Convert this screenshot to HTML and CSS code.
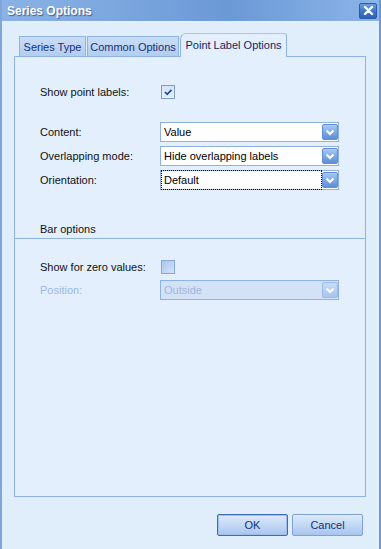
FILE: index.html
```html
<!DOCTYPE html>
<html lang="en">
<head>
    <meta charset="UTF-8">
    <title>Series Options</title>
    <link rel="stylesheet" href="styles.css">
</head>
<body>
<div class="window">
    <div class="titlebar">
        <span class="title">Series Options</span>
        <span class="close">
            <svg width="11" height="9" viewBox="0 0 11 9"><path d="M2 1 L9 8 M9 1 L2 8" stroke="#fff" stroke-width="2.4" stroke-linecap="round"/></svg>
        </span>
    </div>

    <div class="content">
        <div class="tabs">
            <div class="tab t1">Series Type</div>
            <div class="tab t2">Common Options</div>
            <div class="tab t3 active">Point Label Options</div>
        </div>

        <div class="panel">
            <div class="section">
                <div class="row first">
                    <span class="label">Show point labels:</span>
                    <span class="check">
                        <svg width="12" height="12" viewBox="0 0 12 12"><path d="M3 6 L5.2 8.3 L9.5 3.8" fill="none" stroke="#1d4c9c" stroke-width="1.8"/></svg>
                    </span>
                </div>
                <div class="row big">
                    <span class="label">Content:</span>
                    <div class="select"><span class="value">Value</span><span class="arrow"><svg width="16" height="16" viewBox="0 0 16 16"><path d="M4.5 6.5 L8 10 L11.5 6.5" fill="none" stroke="#fff" stroke-width="2.2"/></svg></span></div>
                </div>
                <div class="row">
                    <span class="label">Overlapping mode:</span>
                    <div class="select"><span class="value">Hide overlapping labels</span><span class="arrow"><svg width="16" height="16" viewBox="0 0 16 16"><path d="M4.5 6.5 L8 10 L11.5 6.5" fill="none" stroke="#fff" stroke-width="2.2"/></svg></span></div>
                </div>
                <div class="row">
                    <span class="label">Orientation:</span>
                    <div class="select focused"><span class="value">Default</span><span class="arrow"><svg width="16" height="16" viewBox="0 0 16 16"><path d="M4.5 6.5 L8 10 L11.5 6.5" fill="none" stroke="#fff" stroke-width="2.2"/></svg></span></div>
                </div>
            </div>

            <div class="group-head">Bar options</div>

            <div class="section">
                <div class="row zero">
                    <span class="label">Show for zero values:</span>
                    <span class="check empty"></span>
                </div>
                <div class="row tight">
                    <span class="label disabled">Position:</span>
                    <div class="select off"><span class="value">Outside</span><span class="arrow"><svg width="16" height="16" viewBox="0 0 16 16"><path d="M4.5 6.5 L8 10 L11.5 6.5" fill="none" stroke="#fff" stroke-width="2.2"/></svg></span></div>
                </div>
            </div>
        </div>

        <div class="buttons">
            <button class="btn default">OK</button>
            <button class="btn">Cancel</button>
        </div>
    </div>
</div>
</body>
</html>
```

FILE: styles.css
```css
*{
    box-sizing: border-box;
}
body{
    margin: 0;
    font-family: 'Liberation Sans', Arial, sans-serif;
    font-size: 11px;
    color: #111;
}
.window{
    width: 381px;
    height: 549px;
    background-color: #E0EDFB;
    border-left: 2px solid #7FA5DA;
    border-right: 2px solid #6F97D2;
}
.titlebar{
    height: 22px;
    display: flex;
    align-items: center;
    justify-content: space-between;
    padding: 0 2px 0 5px;
    background: linear-gradient(to right, #8AB2E6, #76A2DC 40%, #6B99D6 60%, #8BB4E8);
    border-bottom: 1px solid #EAF2FD;
}
.title{
    color: white;
    font-weight: bold;
    font-size: 12px;
    text-shadow: 1px 1px 1px #3A5F99;
}
.close{
    width: 18px;
    height: 16px;
    display: flex;
    align-items: center;
    justify-content: center;
    border: 1px solid #2A5AA8;
    border-radius: 2px;
    background: linear-gradient(#6E9DE0, #3D72C6 55%, #2F63B7);
}
.content{
    padding: 11px 13px 0 12px;
}
.tabs{
    display: flex;
    align-items: flex-end;
    height: 23px;
    padding-left: 5px;
    gap: 1px;
}
.tab{
    height: 20px;
    display: flex;
    align-items: center;
    justify-content: center;
    color: #15307A;
    border: 1px solid #8DB2E3;
    border-bottom: 0;
    background: linear-gradient(#C9DDF7, #B3CDF0);
}
.t1{ width: 67px; }
.t2{ width: 92px; }
.t3{ width: 107px; }
.tab.active{
    height: 24px;
    margin-bottom: -1px;
    position: relative;
    background: #E3EFFC;
    border-top-color: #A9C6EC;
    border-radius: 6px 3px 0 0;
    padding-bottom: 2px;
    color: #111F66;
}
.panel{
    width: 352px;
    height: 441px;
    border: 1px solid #8DB2E3;
    background-color: #E3EFFC;
}
.section{
    padding-left: 25px;
}
.row{
    display: flex;
    align-items: center;
    height: 20px;
    margin-top: 4px;
}
.row.first{ margin-top: 25px; }
.row.big{ margin-top: 20px; }
.row.zero{ margin-top: 18px; }
.row.tight{ margin-top: 3px; }
.label{
    width: 120px;
}
.label.disabled{
    color: #9DB6E0;
}
.check{
    width: 14px;
    height: 14px;
    margin-left: 1px;
    display: flex;
    align-items: center;
    justify-content: center;
    border: 1px solid #7C9FD3;
    background: linear-gradient(#D4E3F7, #E7F0FC);
}
.check.empty{
    background: linear-gradient(135deg, #A9C5EE, #D4E4F9);
    border-color: #86A8DB;
}
.select{
    width: 179px;
    height: 20px;
    display: flex;
    align-items: center;
    padding: 1px 0 1px 1px;
    border: 1px solid #8DB2E3;
    background: white;
}
.value{
    flex: 1;
    height: 16px;
    line-height: 16px;
    padding-left: 2px;
    color: #000;
}
.focused .value{
    outline: 1px dotted #000;
    margin-right: 1px;
    height: 18px;
    line-height: 18px;
}
.arrow{
    width: 16px;
    height: 16px;
    border-radius: 2px;
    border: 1px solid #5F8ED2;
    background: linear-gradient(#A9C9F2, #7BA6E2 55%, #5E8FD6);
    display: flex;
}
.arrow svg{
    margin: -1px;
}
.select.off{
    background: #D3E2F6;
}
.off .value{
    color: #9DB6E0;
}
.off .arrow{
    border-color: #9CBBE6;
    background: linear-gradient(#C6DBF6, #A8C5EE);
}
.group-head{
    margin-top: 30px;
    height: 19px;
    padding-left: 25px;
    border-bottom: 1px solid #8DB2E3;
    display: flex;
    align-items: center;
}
.buttons{
    display: flex;
    justify-content: flex-end;
    gap: 4px;
    margin-top: 17px;
    margin-right: 3px;
}
.btn{
    width: 71px;
    height: 22px;
    font-family: 'Liberation Sans', Arial, sans-serif;
    font-size: 11px;
    color: #15307A;
    border: 1px solid #7FA2D6;
    border-radius: 2px;
    background: linear-gradient(#DDEAFB, #C3D8F4 50%, #A8C5EE);
    padding: 0;
}
.btn.default{
    border-color: #3E6DB5;
    box-shadow: inset 0 0 0 1px #9DBDEB;
}
```
